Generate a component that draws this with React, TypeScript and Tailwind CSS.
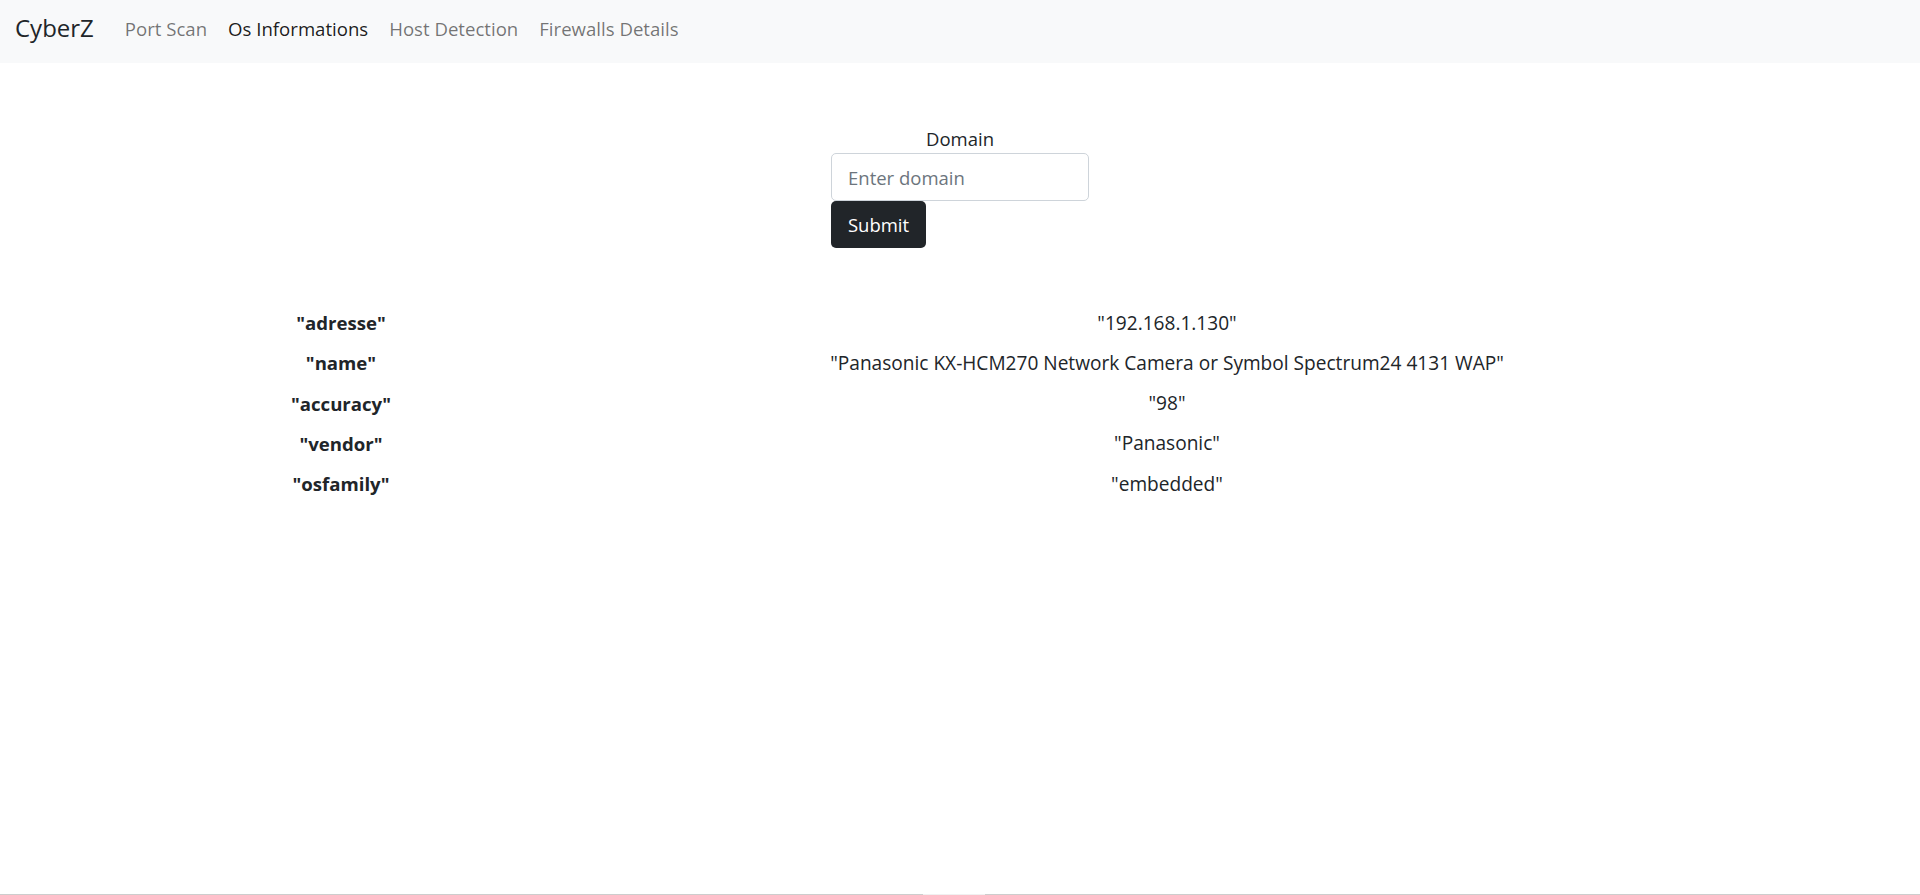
import React from "react";

const rows: [string, string][] = [
  ['"adresse"', '"192.168.1.130"'],
  ['"name"', '"Panasonic KX-HCM270 Network Camera or Symbol Spectrum24 4131 WAP"'],
  ['"accuracy"', '"98"'],
  ['"vendor"', '"Panasonic"'],
  ['"osfamily"', '"embedded"'],
];

export default function App() {
  return (
    <div
      className="flex h-screen flex-col bg-white text-[#212529]"
      style={{ fontFamily: '"Open Sans", "Noto Sans", sans-serif' }}
    >
      <nav className="flex h-[63px] shrink-0 items-start bg-[#f8f9fa] pl-[15px]">
        <a className="mr-[31px] mt-[12px] text-[24px] leading-[32px] text-[#212529]">CyberZ</a>
        <div className="mt-[15px] flex items-center gap-[21px] text-[18.6px] leading-[28px]">
          <a className="text-[rgba(0,0,0,0.55)]">Port Scan</a>
          <a className="text-[rgba(0,0,0,0.9)]">Os Informations</a>
          <a className="text-[rgba(0,0,0,0.55)]">Host Detection</a>
          <a className="text-[rgba(0,0,0,0.55)]">Firewalls Details</a>
        </div>
      </nav>

      <div className="mt-[61px] flex justify-center">
        <form className="flex w-[258px] flex-col" onSubmit={(e) => e.preventDefault()}>
          <label className="text-center text-[18.5px] leading-[29px]">Domain</label>
          <input
            className="h-[48px] w-full rounded-[5px] border border-[#ced4da] bg-white px-[16px] text-[18.5px] text-[#212529] outline-none placeholder:text-[#6c757d]"
            placeholder="Enter domain"
          />
          <div>
            <button
              type="submit"
              className="h-[47px] w-[95px] rounded-[5px] bg-[#212529] text-[18.5px] text-white"
            >
              Submit
            </button>
          </div>
        </form>
      </div>

      <div className="mt-[55px] px-[134px]">
        <div className="grid grid-cols-[414px_1fr]">
          {rows.map(([k, v]) => (
            <React.Fragment key={k}>
              <div className="flex h-[40.2px] items-center justify-center text-[18.6px] font-bold">{k}</div>
              <div className="flex h-[40.2px] items-center justify-center text-[19.1px]">{v}</div>
            </React.Fragment>
          ))}
        </div>
      </div>

      <div className="mt-auto flex h-[1px] shrink-0 bg-[#cdcdcd]">
        <div className="ml-[923px] w-[62px] bg-[#f0f0f0]" />
      </div>
    </div>
  );
}
